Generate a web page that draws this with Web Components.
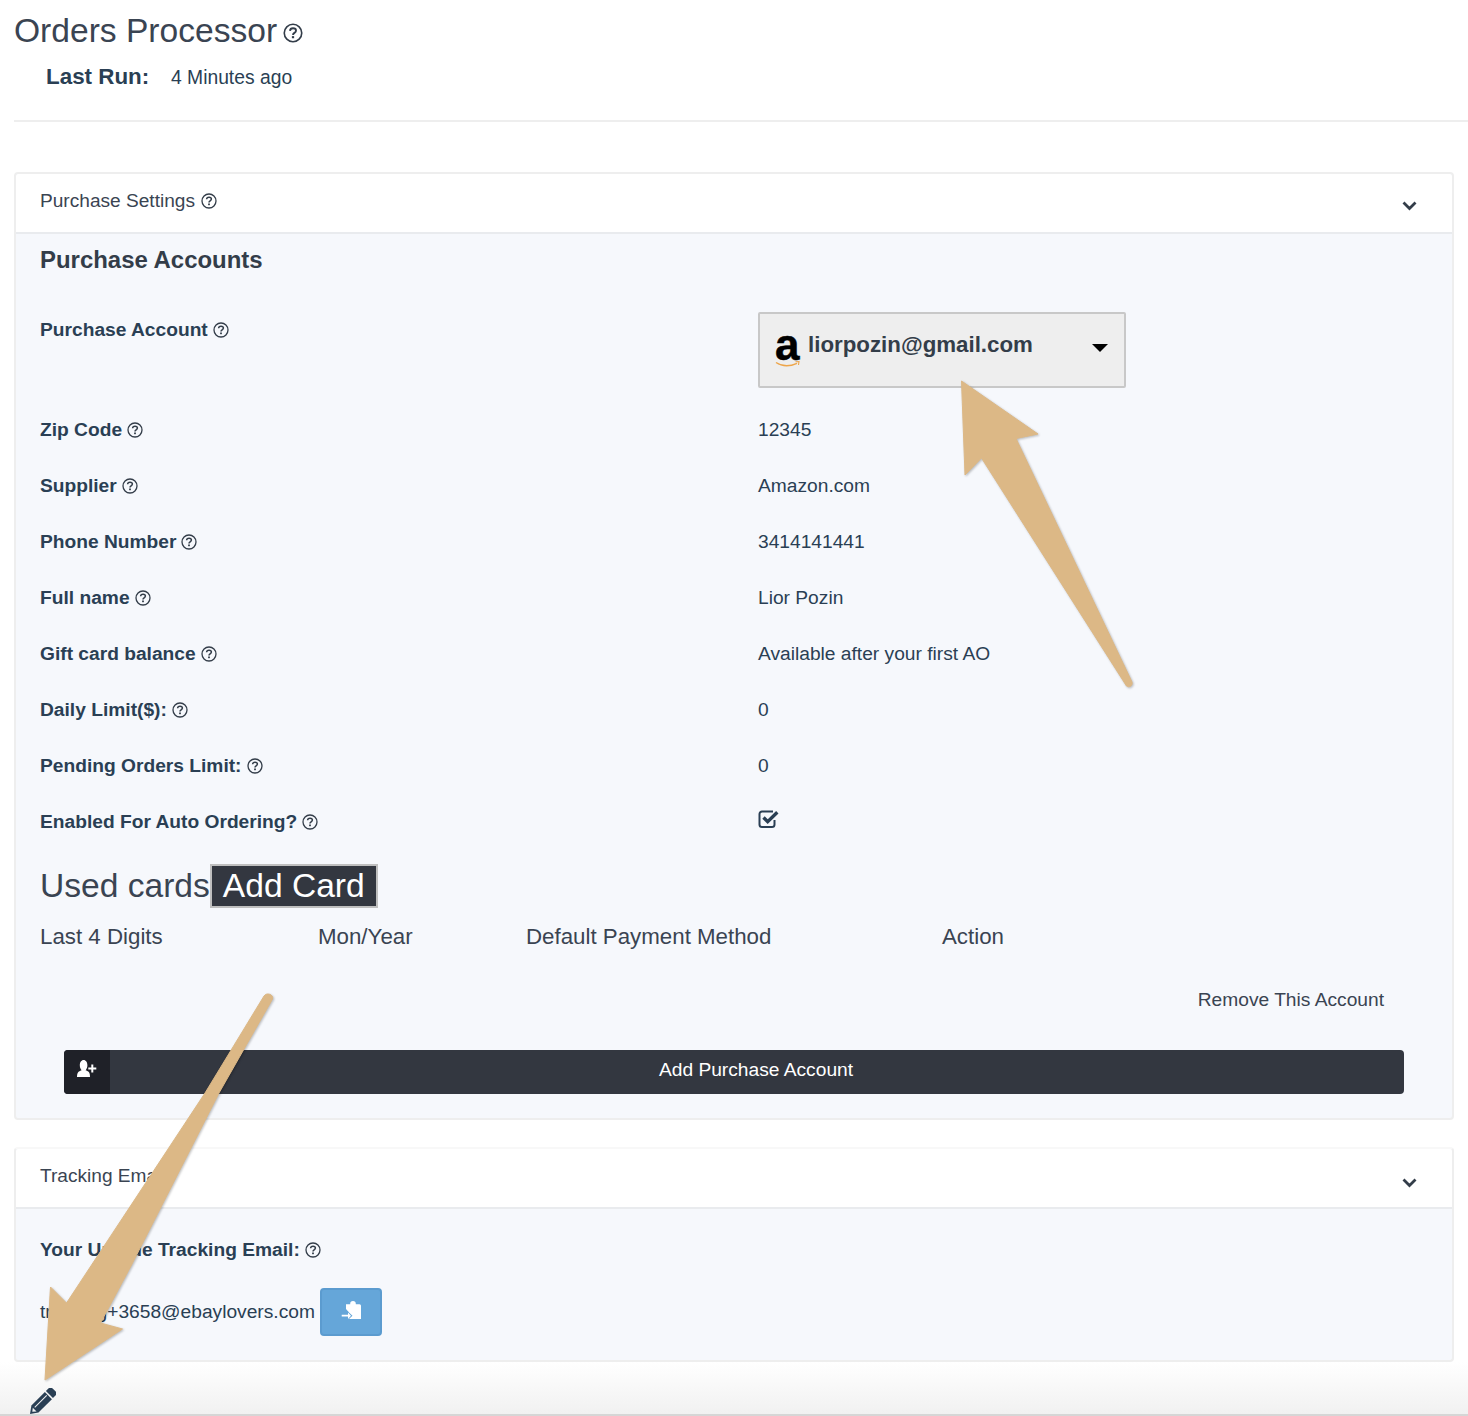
<!DOCTYPE html>
<html>
<head>
<meta charset="utf-8">
<title>Orders Processor</title>
<style>
    html, body { margin: 0; padding: 0; height: 1416px; overflow: hidden; background: #fff; }
    body { font-family: "Liberation Sans", Arial, sans-serif; color: #2a3f54; }
</style>
</head>
<body>
<orders-page>
    <page-header title-text="Orders Processor" last-run="4 Minutes ago"></page-header>

    <settings-panel heading="Purchase Settings" help style="margin-top:50px">
        <h3 style="margin:0;padding:12px 0 0 24px;font:bold 23.95px/28px 'Liberation Sans',sans-serif;color:#333d49;height:55px">Purchase Accounts</h3>
        <field-row label="Purchase Account" style="height:100px"><account-select email="liorpozin@gmail.com"></account-select></field-row>
        <field-row label="Zip Code">12345</field-row>
        <field-row label="Supplier">Amazon.com</field-row>
        <field-row label="Phone Number">3414141441</field-row>
        <field-row label="Full name">Lior Pozin</field-row>
        <field-row label="Gift card balance">Available after your first AO</field-row>
        <field-row label="Daily Limit($):">0</field-row>
        <field-row label="Pending Orders Limit:">0</field-row>
        <field-row label="Enabled For Auto Ordering?"><check-mark></check-mark></field-row>
        <cards-table></cards-table>
        <add-account-button>Add Purchase Account</add-account-button>
    </settings-panel>

    <settings-panel heading="Tracking Emails" style="margin-top:27px;border-top-color:#f8f8f8;--chev-top:29px">
        <tracking-email address="tracking+3658@ebaylovers.com"></tracking-email>
    </settings-panel>

    <page-footer></page-footer>
    <callout-arrows></callout-arrows>
</orders-page>

<script>
const HELP_SVG = (size) => `<svg width="${size}" height="${size}" viewBox="0 0 16 16" fill="none" stroke="currentColor" aria-hidden="true" style="display:block">
    <circle cx="8" cy="8" r="7" stroke-width="1.3"/>
    <path d="M5.6 6.3c.1-1.4 1.1-2.1 2.4-2.1 1.4 0 2.4.8 2.4 1.9 0 1.9-2.4 1.7-2.4 3.4" stroke-width="1.5"/>
    <rect x="7.1" y="10.5" width="1.8" height="1.7" fill="currentColor" stroke="none"/>
</svg>`;

class HelpIcon extends HTMLElement {
    connectedCallback() {
        const size = this.getAttribute('size') || 16;
        this.attachShadow({ mode: 'open' }).innerHTML = `
            <style>:host { display: inline-block; vertical-align: middle; color: #333d49; }</style>
            ${HELP_SVG(size)}`;
    }
}

class OrdersPage extends HTMLElement {
    constructor() {
        super();
        this.attachShadow({ mode: 'open' }).innerHTML = `
            <style>
                :host { display: block; position: relative; height: 1416px; overflow: hidden; }
            </style>
            <slot></slot>`;
    }
}

class PageHeader extends HTMLElement {
    connectedCallback() {
        this.attachShadow({ mode: 'open' }).innerHTML = `
            <style>
                :host { display: block; margin-left: 14px; height: 122px; box-sizing: border-box; border-bottom: 2px solid #eeeeee; }
                h1 { margin: 0; padding-top: 11px; font: 400 33.6px/40px "Liberation Sans", sans-serif; color: #3a4452; display: flex; align-items: center; gap: 6px; }
                h1 help-icon { margin-top: 3px; }
                .run { display: flex; align-items: center; margin: 6px 0 0 32px; height: 40px; }
                b { font: bold 22.4px/26px "Liberation Sans", sans-serif; color: #2a3f54; width: 125px; }
                span { font: 400 19.3px/26px "Liberation Sans", sans-serif; color: #2a3f54; margin-top: 2px; }
            </style>
            <h1>${this.getAttribute('title-text')}<help-icon size="20"></help-icon></h1>
            <div class="run"><b>Last Run:</b><span>${this.getAttribute('last-run')}</span></div>`;
    }
}

class SettingsPanel extends HTMLElement {
    connectedCallback() {
        const help = this.hasAttribute('help') ? '<help-icon size="16"></help-icon>' : '';
        this.attachShadow({ mode: 'open' }).innerHTML = `
            <style>
                :host { display: block; margin-left: 14px; width: 1440px; box-sizing: border-box; border: 2px solid #eeeeee; border-radius: 4px; background: #f6f8fc; }
                header { height: 60px; box-sizing: border-box; background: #fff; border-bottom: 2px solid #e9ebee; padding-left: 24px; display: flex; align-items: center; position: relative; border-radius: 3px 3px 0 0; }
                .t { font: 400 19.1px/24px "Liberation Sans", sans-serif; color: #3a4452; display: flex; align-items: center; gap: 6px; margin-top: -4px; }
                svg.chev { position: absolute; right: 35px; top: var(--chev-top, 27px); }
            </style>
            <header>
                <div class="t">${this.getAttribute('heading')}${help}</div>
                <svg class="chev" width="15" height="10" viewBox="0 0 15 10" fill="none" stroke="#333d49" stroke-width="2.8"><path d="M1.5 1.5l6 6 6-6"/></svg>
            </header>
            <slot></slot>`;
    }
}

class FieldRow extends HTMLElement {
    connectedCallback() {
        this.attachShadow({ mode: 'open' }).innerHTML = `
            <style>
                :host { display: grid; grid-template-columns: 718px 1fr; height: 56px; padding-left: 24px; box-sizing: border-box; font: 400 19.2px/24px "Liberation Sans", sans-serif; color: #2a3f54; }
                .l { padding-top: 17px; font-weight: bold; display: flex; align-items: flex-start; gap: 5px; }
                .l help-icon { margin-top: 4px; }
                .v { padding-top: 17px; }
            </style>
            <div class="l">${this.getAttribute('label')}<help-icon size="16"></help-icon></div>
            <div class="v"><slot></slot></div>`;
    }
}

class AccountSelect extends HTMLElement {
    connectedCallback() {
        this.attachShadow({ mode: 'open' }).innerHTML = `
            <style>
                :host { display: block; width: 368px; height: 76px; margin-top: -6px; box-sizing: border-box; border: 2px solid #c8c8c8; border-radius: 2px; background: #eeeeee; position: relative; }
                .logo { position: absolute; left: 14px; top: 4px; }
                .e { position: absolute; left: 48px; top: 16px; font: bold 22.3px/30px "Liberation Sans", sans-serif; color: #333d49; }
                .c { position: absolute; right: 16px; top: 30px; width: 0; height: 0; border: 8px solid transparent; border-top-color: #000; border-bottom: 0; }
            </style>
            <svg class="logo" width="28" height="54" viewBox="0 0 28 54">
                <text x="1" y="42" font-family="Liberation Sans, sans-serif" font-weight="bold" font-size="44" fill="#000" stroke="#000" stroke-width=".5">a</text>
                <path d="M2 44.500c6 4 14 4 21 .8" fill="none" stroke="#eda54a" stroke-width="1.4"/>
                <path d="M21.500 43.800l3.500-.3-.5 3.500" fill="none" stroke="#eda54a" stroke-width="1.100"/>
            </svg>
            <span class="e">${this.getAttribute('email')}</span>
            <i class="c"></i>`;
    }
}

class CheckMark extends HTMLElement {
    constructor() {
        super();
        this.attachShadow({ mode: 'open' }).innerHTML = `
            <style>:host { display: block; margin-top: -1px; width: 22px; height: 20px; }</style>
            <svg width="22" height="20" viewBox="0 0 22 20" fill="none" stroke="#2a3f54" style="display:block">
                <path d="M16.500 11v4.500a2.500 2.500 0 0 1-2.500 2.500H4a2.500 2.500 0 0 1-2.500-2.500V5A2.500 2.500 0 0 1 4 2.500h11" stroke-width="2"/>
                <path d="M5.500 8.500l4.200 4.200 9.600-9.400" stroke-width="3.400"/>
            </svg>`;
    }
}

class CardsTable extends HTMLElement {
    constructor() {
        super();
        this.attachShadow({ mode: 'open' }).innerHTML = `
            <style>
                :host { display: block; padding-left: 24px; color: #3a4452; }
                .top { display: flex; align-items: center; height: 44px; margin-top: 15px; font: 400 33.6px/44px "Liberation Sans", sans-serif; }
                .top span { margin-top: 0; }
                button { margin: 0; height: 44px; box-sizing: border-box; border: 2px solid #bfbfbf; padding: 0 11px; background: #333740; color: #fff; font: 400 33.6px/36px "Liberation Sans", sans-serif; }
                .cols { display: grid; grid-template-columns: 278px 208px 416px 1fr; height: 46px; margin-top: 6px; font: 400 22.3px/46px "Liberation Sans", sans-serif; }
                .rm { text-align: right; padding-right: 68px; margin-top: 28px; font: 400 19.2px/24px "Liberation Sans", sans-serif; color: #3a4452; }
            </style>
            <div class="top"><span>Used cards</span><button>Add Card</button></div>
            <div class="cols"><span>Last 4 Digits</span><span>Mon/Year</span><span>Default Payment Method</span><span>Action</span></div>
            <div class="rm">Remove This Account</div>`;
    }
}

class AddAccountButton extends HTMLElement {
    constructor() {
        super();
        this.attachShadow({ mode: 'open' }).innerHTML = `
            <style>
                :host { display: flex; margin: 38px 0 24px 48px; width: 1340px; height: 44px; border-radius: 4px; overflow: hidden; background: #333740; color: #fff; font: 400 19.2px/40px "Liberation Sans", sans-serif; }
                .i { width: 46px; background: #1f2128; display: flex; justify-content: center; padding-top: 9px; box-sizing: border-box; }
                .t { flex: 1; text-align: center; padding-right: 2px; }
            </style>
            <div class="i">
                <svg width="20" height="19" viewBox="0 0 20 19" fill="#fff" style="display:block">
                    <path d="M0 18c0-3.500.8-5.400 2.900-6.100.8-.3 1.400-.4 1.700-.6C3.500 10.100 2.800 8.300 2.800 6.300 2.800 3.300 4.300 1 6.600 1s3.800 2.300 3.800 5.300c0 2-.7 3.800-1.800 5 .4.200 1 .3 1.700.6 2.100.7 2.700 2.600 2.700 6.100z"/>
                    <path d="M14.300 5.500h2v3h3v2h-3v3h-2v-3h-3v-2h3z"/>
                </svg>
            </div>
            <div class="t"><slot></slot></div>`;
    }
}

class TrackingEmail extends HTMLElement {
    connectedCallback() {
        this.attachShadow({ mode: 'open' }).innerHTML = `
            <style>
                :host { display: block; padding: 29px 0 24px 24px; font: 400 19.2px/24px "Liberation Sans", sans-serif; color: #2a3f54; }
                .l { font-weight: bold; display: flex; align-items: center; gap: 5px; height: 24px; }
                .r { display: flex; align-items: center; margin-top: 26px; gap: 5px; }
                button { width: 62px; height: 48px; box-sizing: border-box; border: 2px solid #5b9bcf; border-radius: 4px; background: #65a6d9; padding: 0; display: flex; align-items: center; justify-content: center; }
            </style>
            <div class="l">Your Unique Tracking Email:<help-icon size="16"></help-icon></div>
            <div class="r"><span>${this.getAttribute('address')}</span>
                <button aria-label="Copy">
                    <svg width="24" height="22" viewBox="0 0 24 22" fill="#fff" style="display:block">
                        <path d="M7 3.200h4.200V2.800a2.800 2.800 0 0 1 5.600 0v.4h3.700A1.500 1.500 0 0 1 22 4.700V18H10v-6.500L7 8z"/>
                        <path d="M2.500 14.700h8" fill="none" stroke="#65a6d9" stroke-width="5"/>
                        <path d="M8 11l4 3.700-4 3.700z" stroke="#65a6d9" stroke-width="2"/>
                        <path d="M2.700 13.800h6.300v-2.300l3 3.200-3 3.200v-2.300H2.700z"/>
                    </svg>
                </button>
            </div>`;
    }
}

class PageFooter extends HTMLElement {
    constructor() {
        super();
        this.attachShadow({ mode: 'open' }).innerHTML = `
            <style>
                :host { display: block; position: absolute; left: 0; right: 0; bottom: 0; height: 54px; background: linear-gradient(#ffffff 0%, #f1f1f1 100%); border-bottom: 2px solid #d6d6d6; box-sizing: border-box; z-index: 0; }
                svg { position: absolute; left: 29px; top: 26px; }
            </style>
            <svg width="27" height="28" viewBox="0 0 27 28" fill="#2a3f54">
                <g transform="translate(1 26) rotate(-45)">
                    <path d="M0 0L7 -5H26V5H7z"/>
                    <path d="M27.500 -5H31a3 3 0 0 1 3 3V2a3 3 0 0 1-3 3H27.500z"/>
                    <path d="M3.200 0L6.500 -2.500 V2.800z" fill="#f2f2f2"/>
                    <rect x="8" y="-1.800" width="17" height="1" fill="#f2f2f2"/>
                </g>
            </svg>`;
    }
}

class CalloutArrows extends HTMLElement {
    constructor() {
        super();
        this.attachShadow({ mode: 'open' }).innerHTML = `
            <style>
                :host { position: absolute; inset: 0; display: block; pointer-events: none; z-index: 2; }
                svg { display: block; filter: drop-shadow(1px 1px 1px rgba(0,0,0,.25)); }
            </style>
            <svg width="1468" height="1416" viewBox="0 0 1468 1416" fill="#dcb886" stroke="#dcb886" stroke-width="1" stroke-linejoin="round">
                <path d="M961.500 381L1038 434 1016 438.500 1132 682c1 4-3 6-5.500 4L981.500 458 965 475z"/>
                <path d="M45 1380L50.500 1287 66.500 1303 205 1093 264 996c2.500-4 10-1.500 8.500 3L219 1093 131.500 1265 100.500 1323 122.500 1329z"/>
            </svg>`;
    }
}

customElements.define('help-icon', HelpIcon);
customElements.define('orders-page', OrdersPage);
customElements.define('page-header', PageHeader);
customElements.define('settings-panel', SettingsPanel);
customElements.define('field-row', FieldRow);
customElements.define('account-select', AccountSelect);
customElements.define('check-mark', CheckMark);
customElements.define('cards-table', CardsTable);
customElements.define('add-account-button', AddAccountButton);
customElements.define('tracking-email', TrackingEmail);
customElements.define('page-footer', PageFooter);
customElements.define('callout-arrows', CalloutArrows);
</script>
</body>
</html>
